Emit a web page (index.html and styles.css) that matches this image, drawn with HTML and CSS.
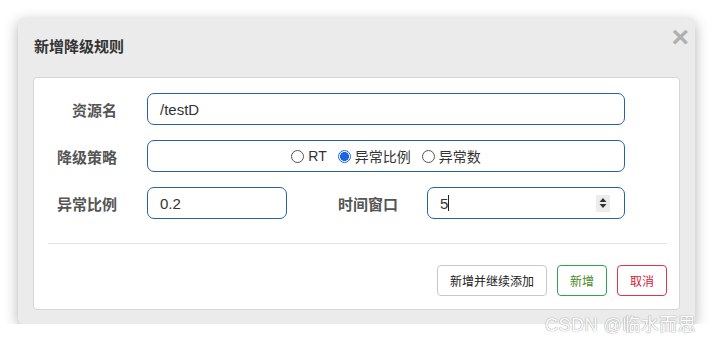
FILE: index.html
```html
<!DOCTYPE html>
<html lang="zh-CN">
<head>
  <meta charset="UTF-8">
  <meta name="viewport" content="width=device-width, initial-scale=1.0">
  <title>新增降级规则</title>
  <link rel="stylesheet" href="styles.css">
</head>
<body>
  <div class="modal">
    <div class="modal-header">
      <h3 class="modal-title">新增降级规则</h3>
      <span class="close">&times;</span>
    </div>
    <div class="panel">
      <div class="form-row">
        <label class="label">资源名</label>
        <div class="field wide">/testD</div>
      </div>
      <div class="form-row">
        <label class="label">降级策略</label>
        <div class="field wide radios">
          <span class="radio"><i class="dot"></i>RT</span>
          <span class="radio"><i class="dot on"></i>异常比例</span>
          <span class="radio"><i class="dot"></i>异常数</span>
        </div>
      </div>
      <div class="form-row">
        <label class="label">异常比例</label>
        <div class="field short">0.2</div>
        <label class="label second">时间窗口</label>
        <div class="field number">
          <span>5<i class="caret"></i></span>
          <span class="spin">
            <svg width="8" height="12" viewBox="0 0 8 12"><path d="M4 1 L7.5 5 H0.5 Z M4 11 L7.5 7 H0.5 Z" fill="#333"/></svg>
          </span>
        </div>
      </div>
      <div class="footer">
        <button class="btn">新增并继续添加</button>
        <button class="btn ok">新增</button>
        <button class="btn cancel">取消</button>
      </div>
    </div>
  </div>
  <div class="watermark">CSDN @临水而思</div>
</body>
</html>
```

FILE: styles.css
```css
body {
  margin: 0;
  background-color: #ffffff;
  font-family: "Liberation Sans", Arial, "Noto Sans CJK SC", sans-serif;
  color: #333;
}
.modal {
  margin: 18px 0 0 18px;
  width: 677px;
  height: 306px;
  background-color: #ebebeb;
  border-radius: 5px;
  box-shadow: 0 4px 14px rgba(0, 0, 0, 0.3);
  box-sizing: border-box;
  padding: 0 15px 14px;
  display: flex;
  flex-direction: column;
}
.modal-header {
  height: 59px;
  display: flex;
  align-items: flex-start;
  justify-content: space-between;
}
.modal-title {
  margin: 17px 0 0 1px;
  font-size: 15px;
  font-weight: bold;
  color: #333;
}
.close {
  margin: 5px -9px 0 0;
  font-size: 30px;
  font-weight: bold;
  color: #b0b0b0;
  line-height: 28px;
}
.panel {
  flex: 1;
  background-color: #ffffff;
  border: 1px solid #d6d6d6;
  border-radius: 4px;
  padding: 15px 12px 0 14px;
  display: flex;
  flex-direction: column;
}
.form-row {
  display: flex;
  align-items: center;
  margin-bottom: 15px;
}
.label {
  width: 69px;
  text-align: right;
  font-size: 15px;
  font-weight: bold;
  color: #555;
  margin-right: 30px;
}
.label.second {
  width: auto;
  text-align: left;
  margin-left: 51px;
  margin-right: 29px;
}
.field {
  height: 32px;
  box-sizing: border-box;
  border: 1px solid #2563a6;
  border-radius: 7px;
  padding: 0 12px;
  display: flex;
  align-items: center;
  font-size: 15px;
  color: #333;
}
.wide {
  width: 478px;
}
.short {
  width: 140px;
}
.number {
  width: 198px;
  justify-content: space-between;
  padding-right: 14px;
}
.caret {
  display: inline-block;
  width: 1px;
  height: 16px;
  background-color: #222;
  vertical-align: -2px;
}
.spin {
  width: 14px;
  height: 17px;
  background-color: #ececec;
  display: flex;
  align-items: center;
  justify-content: center;
}
.radios {
  justify-content: center;
  gap: 11px;
  font-size: 14px;
}
.radio {
  display: flex;
  align-items: center;
}
.dot {
  width: 11px;
  height: 11px;
  border: 1px solid #555;
  border-radius: 50%;
  margin-right: 4px;
  box-sizing: content-box;
}
.dot.on {
  border-color: #1a66e0;
  background: radial-gradient(circle, #1a66e0 55%, #fff 60%);
}
.footer {
  margin-top: 9px;
  border-top: 1px solid #e2e2e2;
  padding-top: 21px;
  display: flex;
  justify-content: flex-end;
  gap: 10px;
}
.btn {
  height: 31px;
  padding: 0 12px;
  font-family: "Liberation Sans", Arial, "Noto Sans CJK SC", sans-serif;
  font-size: 12px;
  background-color: #fff;
  border: 1px solid #c8c8c8;
  border-radius: 4px;
  color: #222;
}
.btn.ok {
  border-color: #2ea44f;
  color: #4a8a2a;
}
.btn.cancel {
  border-color: #dc3545;
  color: #d0213a;
}
.watermark {
  position: absolute;
  left: 545px;
  top: 310px;
  font-size: 18px;
  letter-spacing: 0.5px;
  color: #ffffff;
  text-shadow: 0 0 1px #999, 0 0 1px #999;
}
```
